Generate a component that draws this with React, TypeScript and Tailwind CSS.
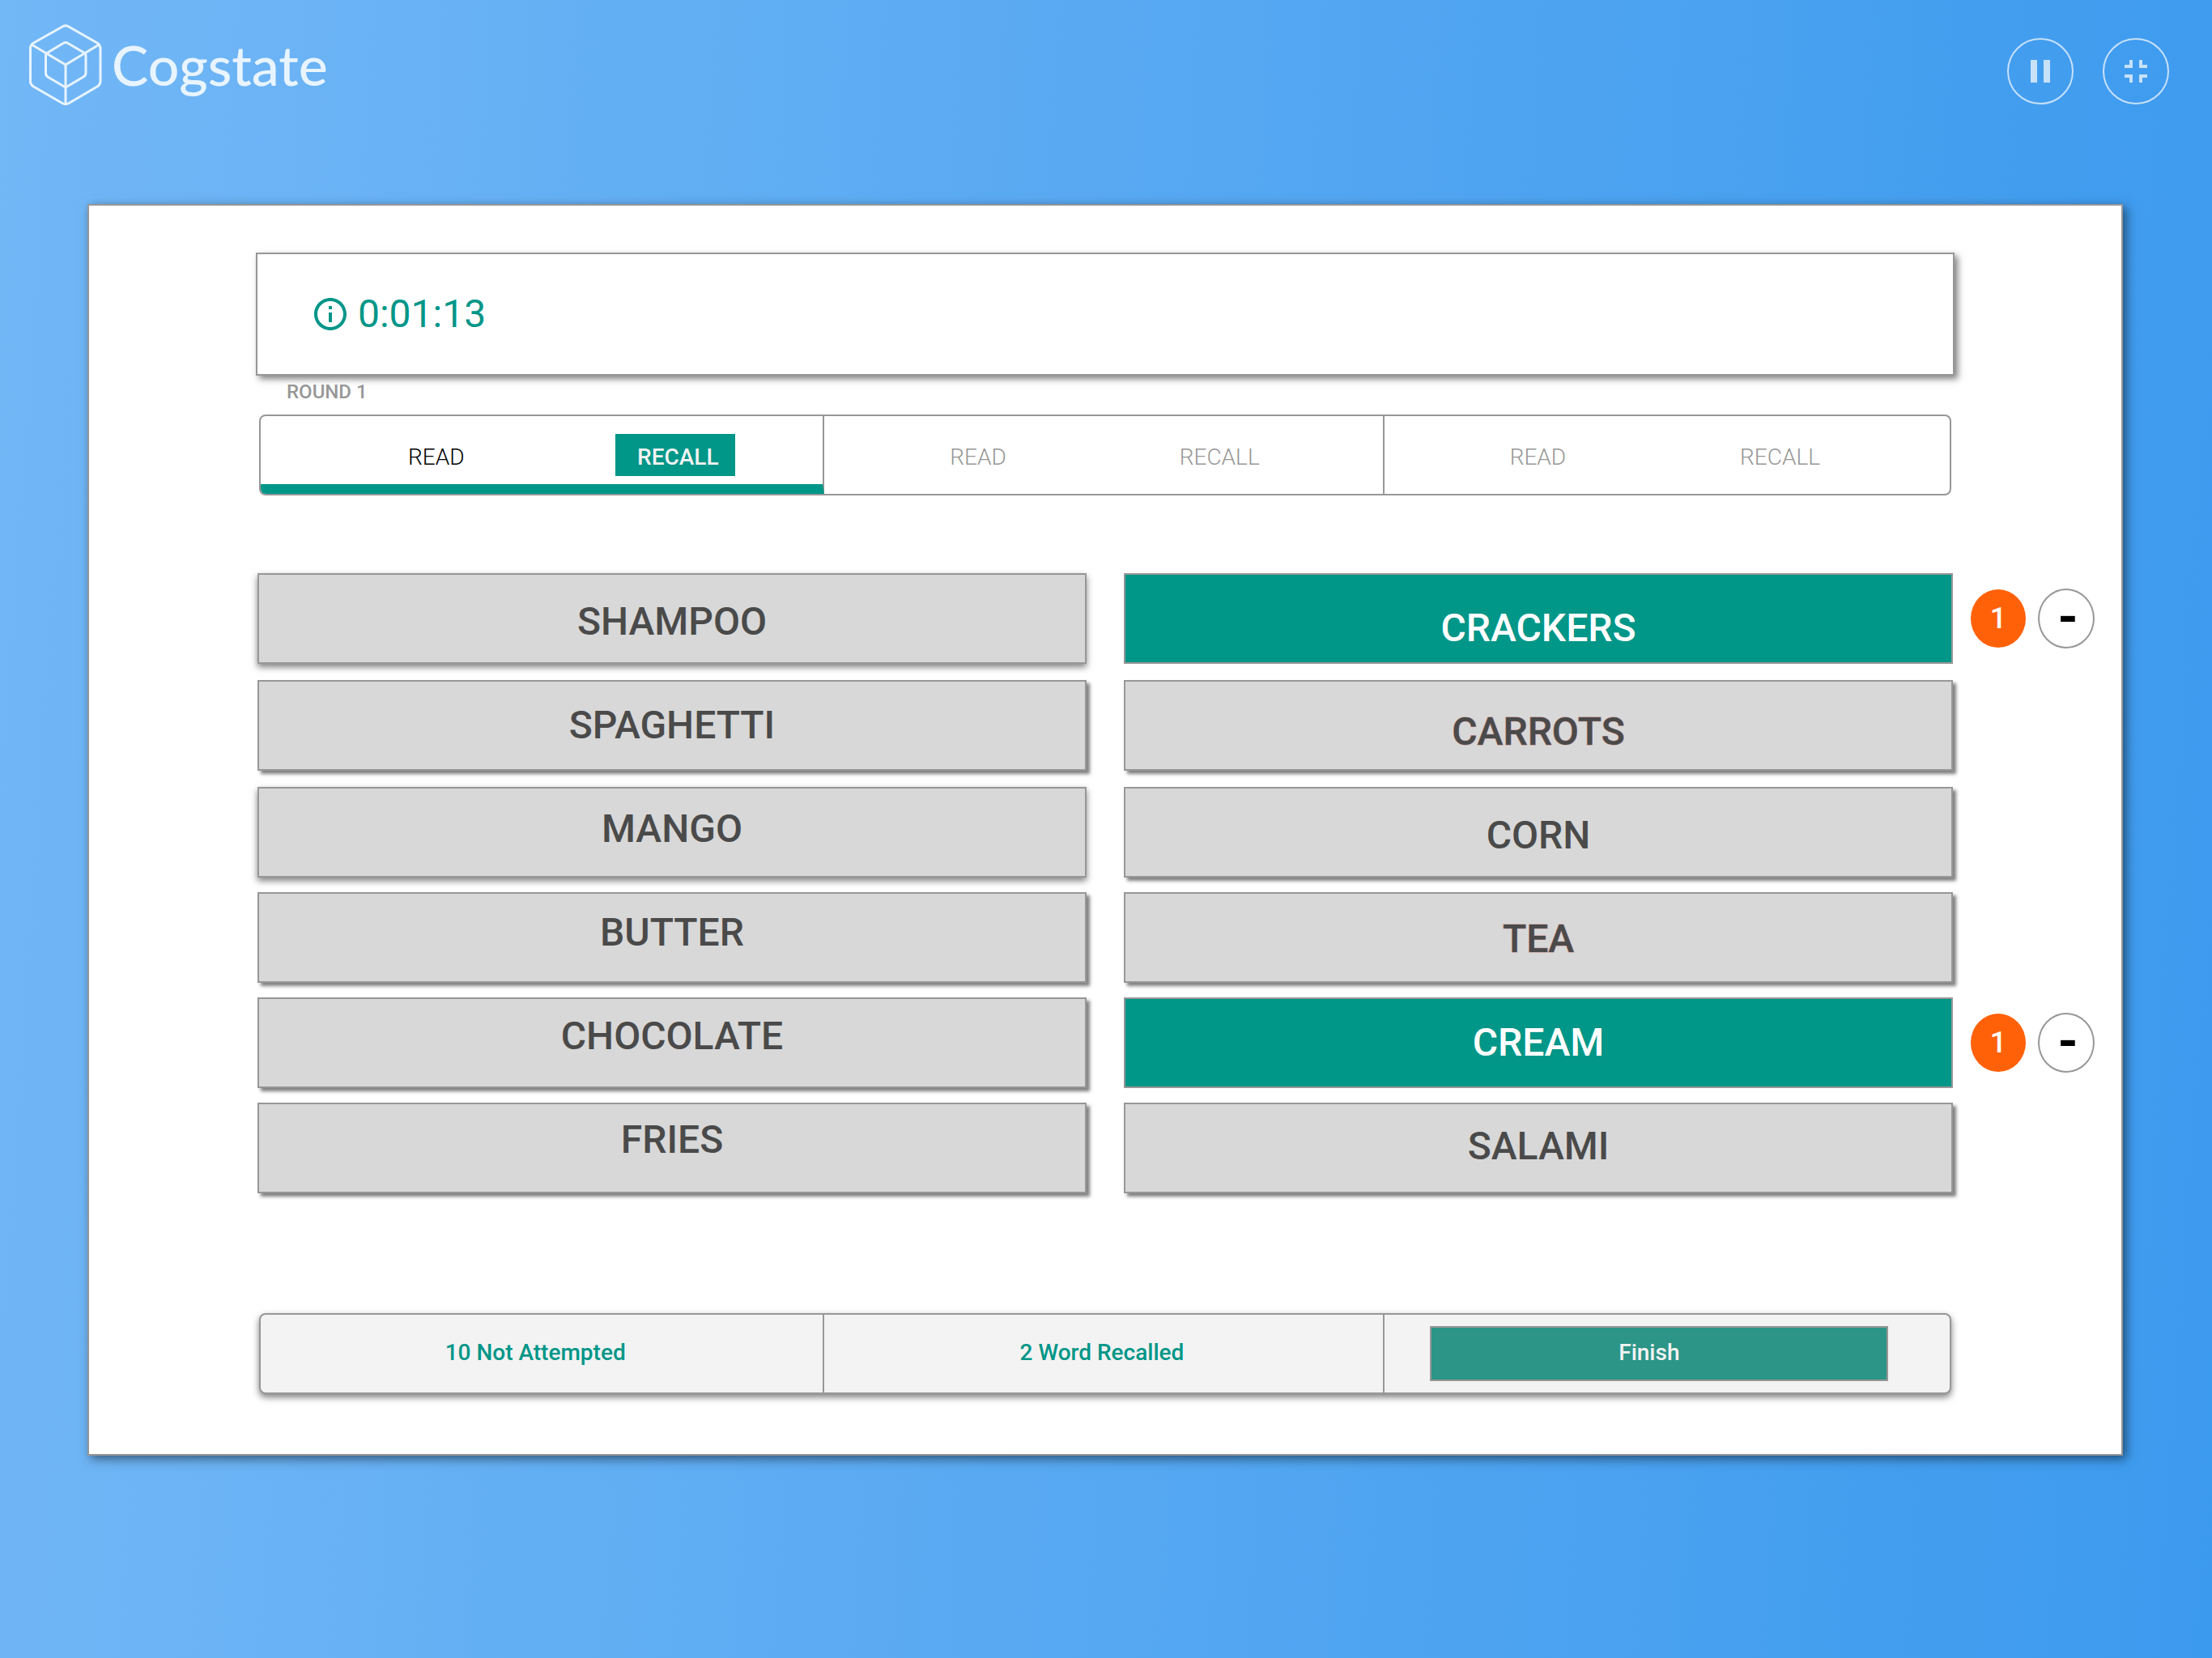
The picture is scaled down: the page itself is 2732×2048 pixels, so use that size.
import React from "react";

type Word = { label: string; pad: string; count?: number; shadow: string; tone: string };

const soft = "shadow-[0_4px_8px_rgba(0,0,0,0.5)]";
const hard = "shadow-[4px_4px_4px_rgba(0,0,0,0.5)]";
const gray = "bg-[#d8d8d8] text-[#4a4a4a]";
const grayWarm = "bg-[#d8d8d8] text-[#4a4a4a] [-webkit-text-stroke:1px_#c48e8e] [paint-order:stroke_fill]";
const teal = "bg-[#009688] text-white";

const leftWords: Word[] = [
  { label: "SHAMPOO", pad: "pt-7.5", shadow: soft, tone: gray },
  { label: "SPAGHETTI", pad: "pt-6.5", shadow: hard, tone: gray },
  { label: "MANGO", pad: "pt-5.5", shadow: soft, tone: gray },
  { label: "BUTTER", pad: "pt-5", shadow: hard, tone: gray },
  { label: "CHOCOLATE", pad: "pt-4.5", shadow: hard, tone: gray },
  { label: "FRIES", pad: "pt-4", shadow: hard, tone: gray },
];

const rightWords: Word[] = [
  { label: "CRACKERS", pad: "pt-9.5", shadow: "", tone: teal, count: 1 },
  { label: "CARROTS", pad: "pt-8.5", shadow: hard, tone: grayWarm },
  { label: "CORN", pad: "pt-7.5", shadow: hard, tone: gray },
  { label: "TEA", pad: "pt-7", shadow: hard, tone: grayWarm },
  { label: "CREAM", pad: "pt-6.5", shadow: "", tone: teal, count: 1 },
  { label: "SALAMI", pad: "pt-6", shadow: hard, tone: gray },
];

function Logo() {
  return (
    <a href="#" className="flex items-center gap-3 text-[#e8f4ff]">
      <svg viewBox="0 0 90 100" className="h-[100px] w-[90px]" fill="none" stroke="currentColor" strokeWidth="3" strokeLinejoin="round">
        <path d="M41 3 Q45 .7 49 3 L84 23 Q88 25.500 88 30 L88 70 Q88 74.500 84 77 L49 97.500 Q45 99.700 41 97.500 L5.500 77 Q1.500 74.500 1.500 70 L1.500 30 Q1.500 25.500 5.500 23 Z" />
        <path d="M42 23.500 Q45 21.500 48 23.500 L68.500 35.500 Q70 36.500 70 38.500 L70 60 Q70 63.500 67 65 L45 78 L23 65 Q20.500 63.500 20.500 60 L20.500 38.500 Q20.500 36.500 22 35.500 Z" />
        <path d="M3 25 L45 50 L86.500 25 M45 50 V98" />
      </svg>
      <span className="font-[Lato,sans-serif] text-[68px] leading-[80px] font-medium">Cogstate</span>
    </a>
  );
}

function RoundButton({ label, d }: { label: string; d: string }) {
  return (
    <button type="button" aria-label={label} className="flex size-[82px] items-center justify-center rounded-full border-2 border-[#c6e1fa] text-[#c6e1fa]">
      <svg viewBox="0 0 24 24" className="size-12" fill="currentColor"><path d={d} /></svg>
    </button>
  );
}

function WordButton({ word }: { word: Word }) {
  return (
    <button type="button" aria-pressed={word.count !== undefined}
      className={`flex h-28 w-full items-start justify-center border-2 border-[#979797] text-5xl leading-[56px] font-medium ${word.pad} ${word.shadow} ${word.tone}`}>
      {word.label}
    </button>
  );
}

function Counter({ word }: { word: Word }) {
  return (
    <div className="absolute top-[19px] left-full ml-[22px] flex items-center gap-[15px]">
      <output className="flex h-[72px] w-[68px] items-center justify-center rounded-[50%] bg-[#ff6109] text-4xl font-medium text-white">{word.count}</output>
      <button type="button" aria-label={`Remove one ${word.label}`}
        className="flex h-[74px] w-[70px] items-center justify-center rounded-[50%] border-2 border-[#979797] pb-0.5 pl-1 text-[64px] leading-none font-bold text-black">-</button>
    </div>
  );
}

function Round({ active }: { active?: boolean }) {
  return (
    <div className={active
      ? "flex items-center justify-between border-r-2 border-b-[12px] border-r-[#979797] border-b-[#009688] pt-3 pr-[108px] pl-[182px] text-black"
      : "flex items-center justify-between border-r-2 border-[#979797] pr-[152px] pl-[155px] text-[#979797] last:border-r-0 last:pr-40"}>
      <span className="pt-1.5 font-light">READ</span>
      {active
        ? <span className="flex h-[52px] w-[148px] items-center justify-center bg-[#009688] pt-1.5 pl-1.5 font-medium text-[#f3f3f3]">RECALL</span>
        : <span className="pt-1.5 font-light">RECALL</span>}
    </div>
  );
}

const thirds = "grid-cols-[697fr_692fr_699fr]";

export default function App() {
  return (
    <div className="flex min-h-screen flex-col bg-[linear-gradient(94deg,#72b7f6_0%,#3c9aee_100%)] font-[Roboto,sans-serif]">
      <header className="flex items-start justify-between pt-[30px] pr-[53px] pl-9">
        <Logo />
        <div className="mt-[17px] flex gap-9">
          <RoundButton label="Pause" d="M6 19h4V5H6v14zm8-14v14h4V5h-4z" />
          <RoundButton label="Exit full screen" d="M5 16h3v3h2v-5H5v2zm3-8H5v2h5V5H8v3zm6 11h2v-3h3v-2h-5v5zm2-11V5h-2v5h5V8h-3z" />
        </div>
      </header>

      <main className="mt-[122px] mr-[110px] ml-[108px] border-2 border-[#979797] bg-white pt-[58px] pr-[208px] pb-[74px] pl-52 shadow-[4px_4px_12px_rgba(0,0,0,0.5)]">
        <div className="-mx-0.5 flex h-[152px] items-center border-2 border-[#979797] pl-[66px] text-[#009688] shadow-[4px_4px_8px_rgba(0,0,0,0.5)]">
          <svg viewBox="0 0 24 24" className="size-12" fill="currentColor" aria-hidden="true">
            <path d="M11 7h2v2h-2zm0 4h2v6h-2zm1-9C6.480 2 2 6.480 2 12s4.480 10 10 10 10-4.480 10-10S17.520 2 12 2zm0 18c-4.410 0-8-3.590-8-8s3.590-8 8-8 8 3.590 8 8-3.590 8-8 8z" />
          </svg>
          <time className="ml-2.5 text-5xl leading-[56px]">0:01:13</time>
        </div>

        <h2 className="mt-1 pl-9 text-2xl leading-8 font-medium text-[#979797]">ROUND 1</h2>

        <section className={`mx-0.5 mt-3 grid h-[100px] overflow-hidden rounded-lg border-2 border-[#979797] text-[28px] leading-8 ${thirds}`}>
          <Round active />
          <Round />
          <Round />
        </section>

        <section className="mt-24 grid grid-cols-2 gap-x-[46px]">
          {[leftWords, rightWords].map((words) => (
            <ul key={words[0].label} className="grid grid-rows-[132px_132px_130px_130px_130px_112px]">
              {words.map((word) => (
                <li key={word.label} className="relative">
                  <WordButton word={word} />
                  {word.count !== undefined && <Counter word={word} />}
                </li>
              ))}
            </ul>
          ))}
        </section>

        <footer className={`mx-0.5 mt-[148px] grid h-[100px] rounded-lg border-2 border-[#979797] bg-[#f3f3f3] text-[28px] leading-8 font-medium text-[#009688] shadow-[0_4px_8px_rgba(0,0,0,0.5)] ${thirds}`}>
          <p className="flex items-center justify-center border-r-2 border-[#979797] pr-4 pb-0.5">10 Not Attempted</p>
          <p className="flex items-center justify-center border-r-2 border-[#979797] pr-1 pb-0.5">2 Word Recalled</p>
          <div className="flex items-center pr-[76px] pl-[56px]">
            <button type="button" className="h-[68px] w-full border-2 border-[#979797] bg-[#2c9587] pr-6 pb-0.5 text-[#f3f3f3]">Finish</button>
          </div>
        </footer>
      </main>
    </div>
  );
}
